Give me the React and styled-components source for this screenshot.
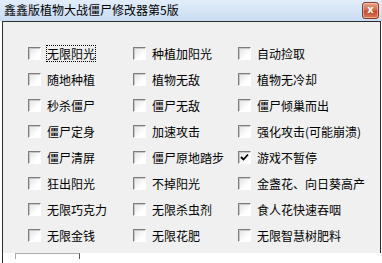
import React, { useState } from "react";
import styled, { createGlobalStyle, css } from "styled-components";

const GlobalStyle = createGlobalStyle`
  html, body {
    margin: 0;
    padding: 0;
    background: #ffffff;
    font-family: "Liberation Sans", "Noto Sans CJK SC", sans-serif;
  }
`;

const Window = styled.div`
  width: 382px;
  height: 263px;
  overflow: hidden;
  display: flex;
  flex-direction: column;
  background: #ffffff;
`;

const TitleBar = styled.div`
  height: 21px;
  display: flex;
  align-items: center;
  justify-content: space-between;
  padding: 0 3px 0 4px;
  background: linear-gradient(to bottom, #e2edf9 0%, #d3e3f5 60%, #cadcf1 100%);
  flex-shrink: 0;
`;

const Title = styled.span`
  font-family: "Noto Sans CJK SC", sans-serif;
  font-size: 12px;
  color: #000;
  line-height: 14px;
  margin-top: -1px;
`;

const CloseButton = styled.div`
  width: 15px;
  height: 15px;
  border: 1px solid #8d3a26;
  border-radius: 3px;
  background: linear-gradient(to bottom, #e8a48c 0%, #d66a4c 45%, #c44a2c 55%, #d87a58 100%);
  color: #fff;
  font-family: "DejaVu Sans", sans-serif;
  font-weight: bold;
  font-size: 10px;
  line-height: 14px;
  text-align: center;
  box-shadow: inset 0 0 0 1px rgba(255, 220, 200, 0.5);
`;

const Frame = styled.div`
  margin-left: 2px;
  width: 377px;
  border-top: 1px solid #2b2b2b;
  border-left: 1px solid #2b2b2b;
  border-right: 1px solid #2b2b2b;
  background: #f0f0f0;
  height: 231px;
  flex-shrink: 0;
`;

const Grid = styled.div`
  display: grid;
  grid-template-columns: 105px 105px 150px;
  grid-auto-rows: 26px;
  padding: 18px 0 0 25px;
`;

const Option = styled.label`
  display: flex;
  align-items: center;
  gap: 5px;
  font-family: "Noto Sans CJK SC", sans-serif;
  font-size: 12px;
  color: #000;
  white-space: nowrap;
  cursor: default;
`;

const Box = styled.span`
  width: 11px;
  height: 11px;
  flex-shrink: 0;
  border: 1px solid;
  border-color: #7c7c7c #ffffff #ffffff #7c7c7c;
  box-shadow: inset 1px 1px 0 #c8c8c8;
  background: linear-gradient(135deg, #e2e2e2 0%, #ffffff 70%);
  display: flex;
  align-items: center;
  justify-content: center;
`;

const Text = styled.span`
  padding: 1px;
  line-height: 15px;
  ${props => props.focused && css`
    outline: 1px dotted #000;
    outline-offset: -1px;
  `}
`;

const Bottom = styled.div`
  flex: 1;
  margin-left: 2px;
  border-left: 1px solid #2b2b2b;
  height: 9px;
  padding-left: 12px;
`;

const PartButton = styled.div`
  width: 63px;
  height: 5px;
  border-top: 1px solid #acacac;
  border-left: 1px solid #acacac;
  border-right: 1px solid #555;
`;

const Check = () => (
  <svg width="9" height="9" viewBox="0 0 9 9">
    <path d="M1 4 L3.5 6.5 L8 1.5" stroke="#000" strokeWidth="1.8" fill="none" />
  </svg>
);

const options = [
  "无限阳光", "种植加阳光", "自动捡取",
  "随地种植", "植物无敌", "植物无冷却",
  "秒杀僵尸", "僵尸无敌", "僵尸倾巢而出",
  "僵尸定身", "加速攻击", "强化攻击(可能崩溃)",
  "僵尸清屏", "僵尸原地踏步", "游戏不暂停",
  "狂出阳光", "不掉阳光", "金盏花、向日葵高产",
  "无限巧克力", "无限杀虫剂", "食人花快速吞咽",
  "无限金钱", "无限花肥", "无限智慧树肥料",
];

const App = () => {
  const [checked, setChecked] = useState({ "游戏不暂停": true });

  const toggle = name => setChecked({ ...checked, [name]: !checked[name] });

  return (
    <Window>
      <GlobalStyle />
      <TitleBar>
        <Title>鑫鑫版植物大战僵尸修改器第5版</Title>
        <CloseButton>x</CloseButton>
      </TitleBar>
      <Frame>
        <Grid>
          {options.map((name, i) => (
            <Option key={name} onClick={() => toggle(name)}>
              <Box>{checked[name] && <Check />}</Box>
              <Text focused={i === 0}>{name}</Text>
            </Option>
          ))}
        </Grid>
      </Frame>
      <Bottom>
        <PartButton />
      </Bottom>
    </Window>
  );
};

export default App;
